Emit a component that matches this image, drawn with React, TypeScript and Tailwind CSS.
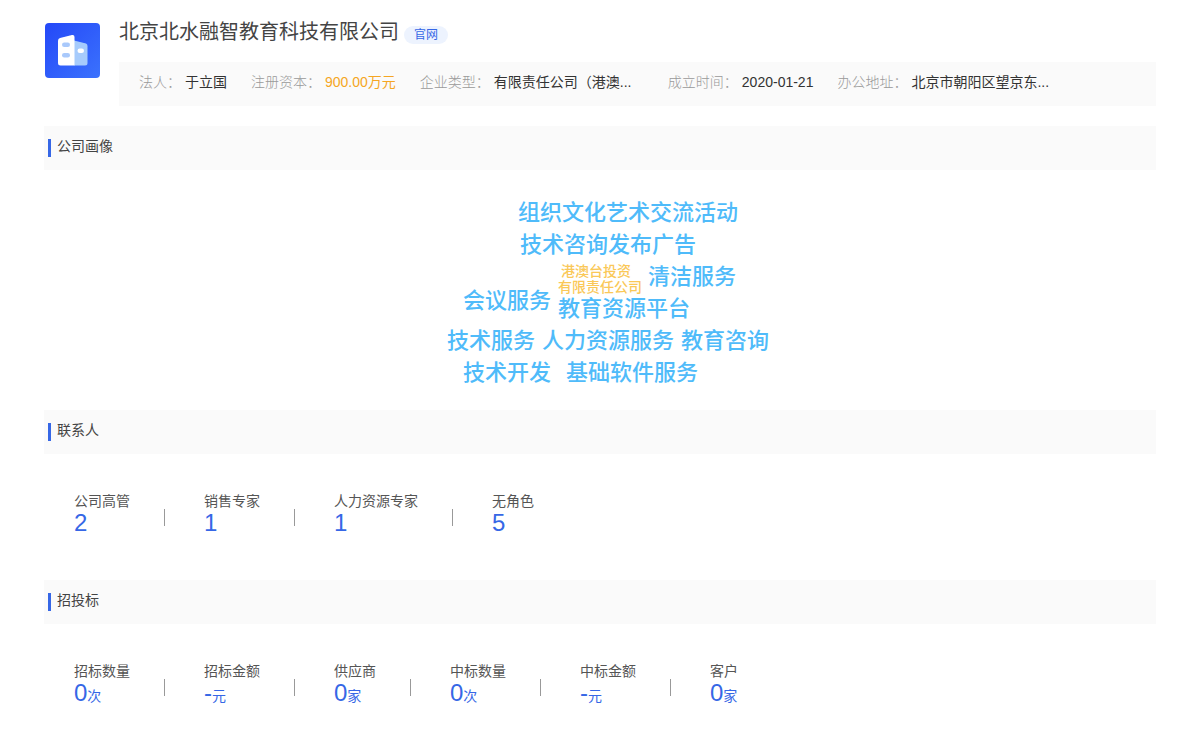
import React from 'react';

interface InfoItem {
    label: string;
    value: string;
    highlight?: boolean;
    fixed?: boolean;
}

interface Stat {
    label: string;
    value: string;
    unit?: string;
}

interface CloudWord {
    text: string;
    place: string;
    minor?: boolean;
}

const companyInfo: InfoItem[] = [
    { label: '法人', value: '于立国' },
    { label: '注册资本', value: '900.00万元', highlight: true },
    { label: '企业类型', value: '有限责任公司（港澳...', fixed: true },
    { label: '成立时间', value: '2020-01-21' },
    { label: '办公地址', value: '北京市朝阳区望京东...', fixed: true },
];

const cloudWords: CloudWord[] = [
    { text: '组织文化艺术交流活动', place: 'left-[118px] top-[27px]' },
    { text: '技术咨询发布广告', place: 'left-[120px] top-[59px]' },
    { text: '港澳台投资', place: 'left-[161px] top-[91px]', minor: true },
    { text: '有限责任公司', place: 'left-[158px] top-[107px]', minor: true },
    { text: '清洁服务', place: 'left-[248px] top-[91px]' },
    { text: '会议服务', place: 'left-[63px] top-[115px]' },
    { text: '教育资源平台', place: 'left-[158px] top-[123px]' },
    { text: '技术服务', place: 'left-[47px] top-[155px]' },
    { text: '人力资源服务', place: 'left-[142px] top-[155px]' },
    { text: '教育咨询', place: 'left-[281px] top-[155px]' },
    { text: '技术开发', place: 'left-[63px] top-[187px]' },
    { text: '基础软件服务', place: 'left-[166px] top-[187px]' },
];

const contactStats: Stat[] = [
    { label: '公司高管', value: '2' },
    { label: '销售专家', value: '1' },
    { label: '人力资源专家', value: '1' },
    { label: '无角色', value: '5' },
];

const biddingStats: Stat[] = [
    { label: '招标数量', value: '0', unit: '次' },
    { label: '招标金额', value: '-', unit: '元' },
    { label: '供应商', value: '0', unit: '家' },
    { label: '中标数量', value: '0', unit: '次' },
    { label: '中标金额', value: '-', unit: '元' },
    { label: '客户', value: '0', unit: '家' },
];

const CompanyLogo: React.FC = () => (
    <svg className="w-[55px] h-[55px] shrink-0" viewBox="0 0 55 55" aria-hidden="true">
        <defs>
            <linearGradient id="logoBg" x1="0" y1="0" x2="1" y2="1">
                <stop offset="0" stopColor="#2448f8" />
                <stop offset="1" stopColor="#3b72fd" />
            </linearGradient>
        </defs>
        <rect width="55" height="55" rx="4" fill="url(#logoBg)" />
        <path d="M29 17.5 41 20.5Q42.500 21 42.500 23V40Q42.500 42.500 40 42.500H29Z" fill="#a6cbfc" />
        <path d="M13 17.5Q13 15.5 15 15L27 12Q29.500 11.500 29.500 14V42.500H15.500Q13 42.500 13 40Z" fill="#fff" />
        <rect x="17" y="19.5" width="8" height="4.5" rx="2.2" fill="#a9c9fb" />
        <rect x="17" y="30" width="8" height="4.5" rx="2.2" fill="#a9c9fb" />
        <rect x="32.5" y="25.5" width="6.5" height="4.5" rx="2.2" fill="#fff" />
    </svg>
);

const SectionTitle: React.FC<{ children: React.ReactNode }> = ({ children }) => (
    <div className="flex h-11 items-center bg-[#fafafa] pl-1">
        <span className="h-[18px] w-[3px] bg-[#3667e6]" />
        <h2 className="ml-[6px] pb-1 text-sm text-[#444]">{children}</h2>
    </div>
);

const StatRow: React.FC<{ stats: Stat[] }> = ({ stats }) => (
    <dl className="flex flex-wrap pl-[30px] pt-[37px] pb-[45px]">
        {stats.map((stat, index) => (
            <React.Fragment key={stat.label}>
                {index > 0 && <div className="ml-[34px] mr-[39px] mt-[18px] h-[17px] w-px bg-[#999]" />}
                <div>
                    <dt className="text-sm leading-5 text-[#555]">{stat.label}</dt>
                    <dd className="text-2xl leading-6 text-[#3667e6]">
                        {stat.value}
                        {stat.unit && <span className="text-sm leading-6">{stat.unit}</span>}
                    </dd>
                </div>
            </React.Fragment>
        ))}
    </dl>
);

const App: React.FC = () => {
    return (
        <main lang="zh-CN" className="min-h-screen bg-white px-11 pt-5 font-['Liberation_Sans','Noto_Sans_CJK_SC',sans-serif]">
            <header className="flex pl-px">
                <div className="pt-[3px]">
                    <CompanyLogo />
                </div>
                <div className="ml-[19px] min-w-0 flex-1">
                    <div className="flex items-center">
                        <h1 className="text-xl leading-6 text-[#444]">北京北水融智教育科技有限公司</h1>
                        <a href="#" className="ml-[5px] mt-[6px] h-[18px] rounded-full bg-[#edf3fe] px-[10px] text-xs leading-[18px] text-[#3667e6]">官网</a>
                    </div>
                    <dl className="mt-[18px] flex min-h-11 flex-wrap items-center gap-x-6 bg-[#fafafa] px-5 pb-1 text-sm">
                        {companyInfo.map(item => (
                            <div key={item.label} className="flex gap-1">
                                <dt className="font-light text-[#999]">{item.label}：</dt>
                                <dd className={`${item.highlight ? 'text-[#f5a623]' : 'text-[#333]'} ${item.fixed ? 'w-[150px] truncate' : ''}`}>
                                    {item.value}
                                </dd>
                            </div>
                        ))}
                    </dl>
                </div>
            </header>

            <section className="mt-5">
                <SectionTitle>公司画像</SectionTitle>
                <div className="relative mx-auto h-60 w-[400px]">
                    {cloudWords.map(word => (
                        <span
                            key={word.text}
                            className={`absolute whitespace-nowrap ${word.place} ${word.minor ? 'text-sm leading-5 text-[#fac858]' : 'text-[22px] leading-8 text-[#4fbbfa]'} font-medium`}
                        >
                            {word.text}
                        </span>
                    ))}
                </div>
            </section>

            <section>
                <SectionTitle>联系人</SectionTitle>
                <StatRow stats={contactStats} />
            </section>

            <section>
                <SectionTitle>招投标</SectionTitle>
                <StatRow stats={biddingStats} />
            </section>
        </main>
    );
};

export default App;
